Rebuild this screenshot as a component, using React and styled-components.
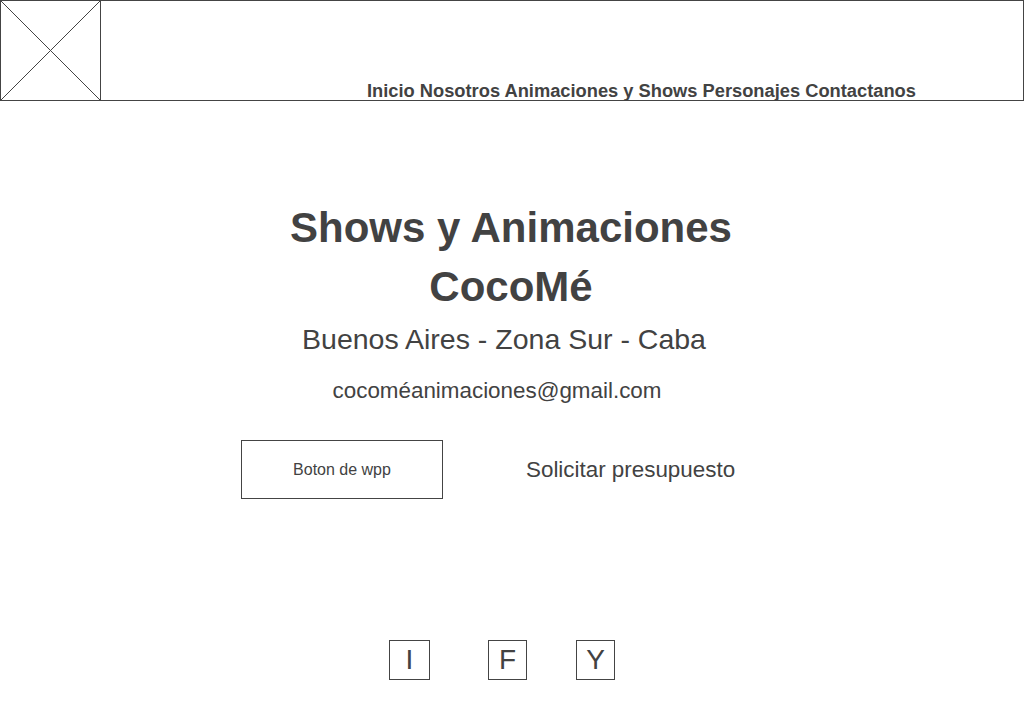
import React from 'react'
import styled, { createGlobalStyle } from 'styled-components';

const GlobalStyle = createGlobalStyle`
  body {
    margin: 0;
    background: #ffffff;
    font-family: "Liberation Sans", Arial, sans-serif;
    color: #424242;
  }
`;

const App = () => {
  return (
    <Page>
      <GlobalStyle />
      <Header>
        <Logo>
          <svg width="99" height="99" viewBox="0 0 99 99">
            <line x1="0" y1="0" x2="99" y2="99" stroke="#444" strokeWidth="1" />
            <line x1="99" y1="0" x2="0" y2="99" stroke="#444" strokeWidth="1" />
          </svg>
        </Logo>
        <Nav>Inicio Nosotros Animaciones y Shows Personajes Contactanos</Nav>
      </Header>

      <Hero>
        <Title>Shows y Animaciones</Title>
        <Title>CocoMé</Title>
        <Subtitle>Buenos Aires - Zona Sur - Caba</Subtitle>
        <Email>cocoméanimaciones@gmail.com</Email>
      </Hero>

      <ActionRow>
        <WppButton>Boton de wpp</WppButton>
        <Quote>Solicitar presupuesto</Quote>
      </ActionRow>

      <SocialRow>
        <SocialBox $w={41}>I</SocialBox>
        <SocialBox $w={39} $ml={58}>F</SocialBox>
        <SocialBox $w={39} $ml={49}>Y</SocialBox>
      </SocialRow>
    </Page>
  )
}

const Page = styled.div`
  width: 1024px;
  height: 728px;
  display: flex;
  flex-direction: column;
`;

const Header = styled.header`
  display: flex;
  box-sizing: border-box;
  height: 101px;
  border: 1px solid #444;
`;

const Logo = styled.div`
  width: 99px;
  height: 99px;
  border-right: 1px solid #444;
  flex-shrink: 0;
  svg {
    display: block;
  }
`;

const Nav = styled.nav`
  align-self: flex-end;
  margin-left: 266px;
  margin-bottom: -1px;
  font-size: 18.3px;
  font-weight: bold;
  line-height: 20px;
  white-space: nowrap;
`;

const Hero = styled.section`
  display: flex;
  flex-direction: column;
  align-items: center;
  padding-top: 97px;
`;

const Title = styled.h1`
  margin: 0;
  font-size: 42px;
  line-height: 59px;
  font-weight: bold;
  padding-right: 2px;
`;

const Subtitle = styled.p`
  margin: 0;
  margin-top: 1px;
  font-size: 28.5px;
  line-height: 44px;
  padding-right: 16px;
`;

const Email = styled.p`
  margin: 0;
  margin-top: 14px;
  font-size: 22.4px;
  line-height: 32px;
  margin-right: 30px;
`;

const ActionRow = styled.div`
  display: flex;
  align-items: center;
  padding-left: 241px;
  margin-top: 33px;
`;

const WppButton = styled.div`
  box-sizing: border-box;
  width: 202px;
  height: 59px;
  border: 1px solid #444;
  display: flex;
  align-items: center;
  justify-content: center;
  font-size: 16px;
`;

const Quote = styled.div`
  margin-left: 83px;
  font-size: 22.4px;
`;

const SocialRow = styled.div`
  display: flex;
  padding-left: 389px;
  margin-top: 141px;
`;

const SocialBox = styled.div`
  box-sizing: border-box;
  width: ${p => p.$w}px;
  height: 40px;
  margin-left: ${p => p.$ml || 0}px;
  border: 1px solid #444;
  display: flex;
  align-items: center;
  justify-content: center;
  font-size: 28px;
`;

export default App
